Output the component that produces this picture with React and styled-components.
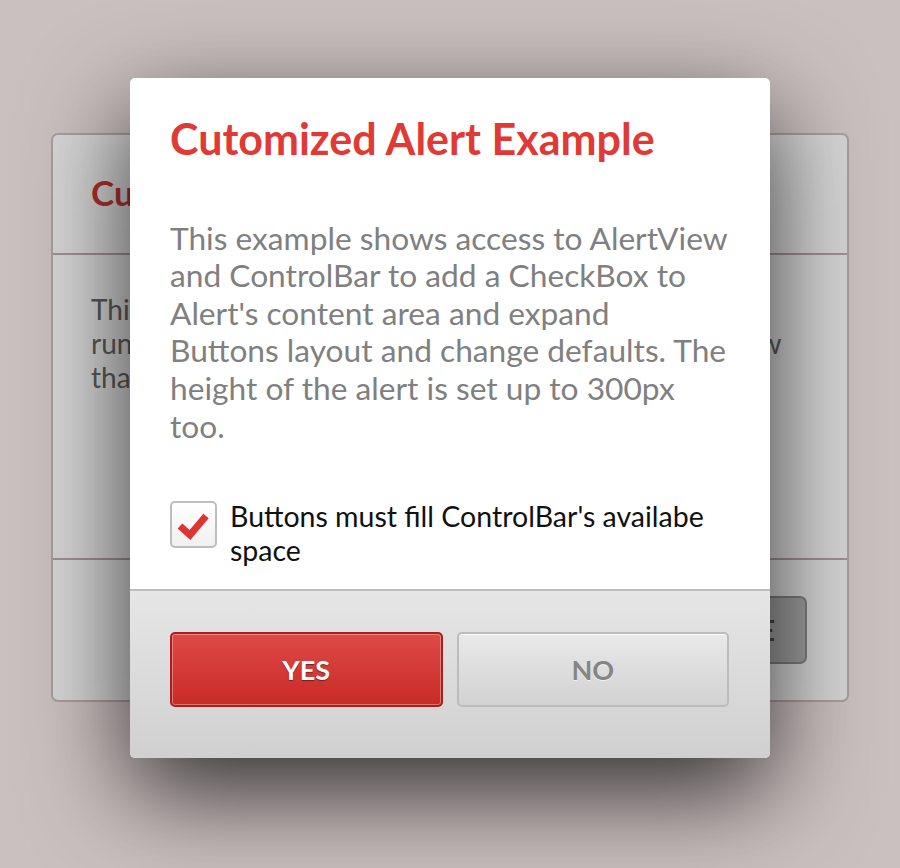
import React from "react";
import styled, { createGlobalStyle } from "styled-components";

const Global = createGlobalStyle`
  html, body { margin: 0; padding: 0; }
  body {
    background: #cbc0c0;
    font-family: Lato, "Open Sans", sans-serif;
    -webkit-font-smoothing: antialiased;
  }
`;

const Page = styled.div`
  position: relative;
  width: 900px;
  height: 868px;
  overflow: hidden;
  background: #cbc0c0;
  display: flex;
  flex-direction: column;
  align-items: center;
`;

/* ---------- background (inactive) alert ---------- */
const BackDialog = styled.div`
  margin-top: 133px;
  width: 798px;
  height: 569px;
  box-sizing: border-box;
  border: 2px solid #a99e9e;
  border-radius: 7px;
  background: #d6d6d6;
  display: flex;
  flex-direction: column;
`;

const BackHeader = styled.div`
  height: 118px;
  display: flex;
  align-items: center;
  padding-left: 38px;
  border-bottom: 2px solid #9c9292;
`;

const BackTitle = styled.h2`
  margin: 0 0 4px;
  font: 700 35px/1.2 Lato, sans-serif;
  color: #b3302c;
`;

const BackBody = styled.div`
  flex: 1;
  padding: 37px 38px 0;
  border-bottom: 2px solid #9c9292;
  font: 400 28px/34px Lato, sans-serif;
  color: #5a5a5a;
`;

const Line = styled.span`
  display: block;
  white-space: nowrap;
`;

const BackFooter = styled.div`
  height: 140px;
  display: flex;
  align-items: center;
  justify-content: flex-end;
  padding-right: 40px;
`;

const BackButton = styled.div`
  width: 150px;
  height: 68px;
  box-sizing: border-box;
  border: 2px solid #7e7e7e;
  border-radius: 7px;
  background: #a0a0a0;
  display: flex;
  align-items: center;
  justify-content: center;
  font: 700 28px Lato, sans-serif;
  color: #4a4a4a;
`;

/* ---------- front alert ---------- */
const Dialog = styled.div`
  position: absolute;
  top: 78px;
  left: 130px;
  width: 640px;
  height: 680px;
  border-radius: 5px;
  background: #ffffff;
  box-shadow: 0 34px 100px rgba(0, 0, 0, 0.76);
  display: flex;
  flex-direction: column;
  overflow: hidden;
`;

const Content = styled.div`
  flex: 1;
  padding: 35px 40px 0;
`;

const Title = styled.h1`
  margin: 0;
  font: 700 43px/1.2 Lato, sans-serif;
  color: #df3a35;
`;

const Message = styled.p`
  margin: 55px 0 0;
  font: 400 31.7px/37.6px Lato, sans-serif;
  color: #808080;
`;

const CheckRow = styled.label`
  margin-top: 54px;
  display: flex;
  align-items: flex-start;
  gap: 13px;
`;

const Box = styled.span`
  flex: none;
  width: 47px;
  height: 47px;
  box-sizing: border-box;
  border: 2px solid #bdbdbd;
  border-radius: 5px;
  background: linear-gradient(#ffffff, #f0f0f0);
  display: flex;
  align-items: center;
  justify-content: center;
  margin-top: 2px;
`;

const CheckLabel = styled.span`
  font: 400 28.5px/34px Lato, sans-serif;
  color: #111111;
`;

const Footer = styled.div`
  border-top: 2px solid #bebebe;
  background: linear-gradient(#e6e6e6, #d0d0d0);
  padding: 41px 41px 51px 40px;
  display: flex;
  gap: 14px;
`;

const Button = styled.button`
  flex: 1;
  height: 75px;
  border-radius: 5px;
  font: 700 27px Lato, sans-serif;
  cursor: pointer;
  border: 2px solid ${(p) => (p.$primary ? "#a91f1d" : "#bcbcbc")};
  background: ${(p) =>
    p.$primary
      ? "linear-gradient(#de4a47, #c92a27)"
      : "linear-gradient(#e9e9e9, #d2d2d2)"};
  color: ${(p) => (p.$primary ? "#ffffff" : "#858585")};
  box-shadow: ${(p) =>
    p.$primary
      ? "inset 0 0 0 1px rgba(255,255,255,0.35)"
      : "inset 0 1px 0 rgba(255,255,255,0.9)"};
  text-shadow: ${(p) =>
    p.$primary ? "0 1px 1px rgba(0,0,0,0.45)" : "0 1px 0 rgba(255,255,255,0.6)"};
`;

const CheckMark = () => (
  <svg width="43" height="43" viewBox="0 0 43 43">
    <path
      d="M8 23 L18 32 L34 13"
      fill="none"
      stroke="#dd3431"
      strokeWidth="7"
      strokeLinejoin="miter"
    />
  </svg>
);

export default function App() {
  return (
    <>
      <Global />
      <Page>
        <BackDialog aria-hidden="true">
          <BackHeader>
            <BackTitle>Customized Alert</BackTitle>
          </BackHeader>
          <BackBody>
            <Line>This alert shows the standard look of an Alert</Line>
            <Line>running in the default settings of every part of AlertView</Line>
            <Line>that nothing else has been changed.</Line>
          </BackBody>
          <BackFooter>
            <BackButton>CLOSE</BackButton>
          </BackFooter>
        </BackDialog>

        <Dialog>
          <Content>
            <Title>Cutomized Alert Example</Title>
            <Message>
              This example shows access to AlertView
              <br />
              and ControlBar to add a CheckBox to
              <br />
              Alert's content area and expand
              <br />
              Buttons layout and change defaults. The
              <br />
              height of the alert is set up to 300px
              <br />
              too.
            </Message>
            <CheckRow>
              <Box>
                <CheckMark />
              </Box>
              <CheckLabel>Buttons must fill ControlBar's availabe space</CheckLabel>
            </CheckRow>
          </Content>
          <Footer>
            <Button $primary>YES</Button>
            <Button>NO</Button>
          </Footer>
        </Dialog>
      </Page>
    </>
  );
}
